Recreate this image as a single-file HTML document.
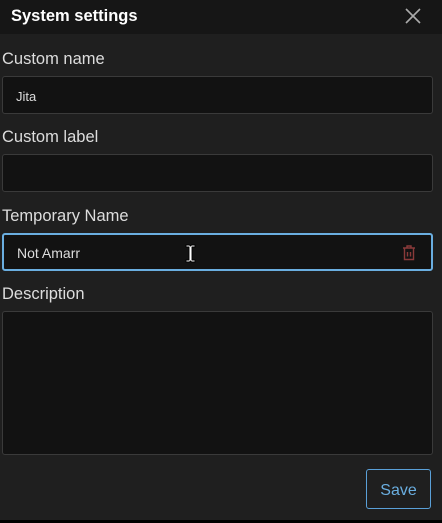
<!DOCTYPE html>
<html><head><style>
body{margin:0;width:442px;height:523px;background:#1f1f1f;font-family:"Liberation Sans",sans-serif;overflow:hidden;position:relative}
.hdr{position:absolute;left:0;top:0;width:442px;height:34px;background:#161616}
.ttl{position:absolute;left:11px;top:7px;color:#fff;font-weight:bold;font-size:16.5px}
.lbl{position:absolute;left:2px;color:#ddd;font-size:16.5px}
.inp{position:absolute;left:2px;width:431px;background:#121212;border:1px solid #3a3a3a;border-radius:3px;color:#ddd;font-size:13px;box-sizing:border-box}
.inp span{position:absolute;left:13px;top:12px}
.btn{position:absolute;left:366px;top:469px;width:65px;height:40px;box-sizing:border-box;border:1px solid #5aa0d8;border-radius:3px;color:#6aaee0;font-size:16px;text-align:center;line-height:42px}
</style></head><body>
<div class="hdr"><div class="ttl">System settings</div>
<svg style="position:absolute;left:405px;top:8px" width="16" height="16" viewBox="0 0 16 16"><path d="M1 1L15 15M15 1L1 15" stroke="#aaa" stroke-width="1.6"/></svg></div>
<div class="lbl" style="top:50px">Custom name</div>
<div class="inp" style="top:76px;height:38px"><span>Jita</span></div>
<div class="lbl" style="top:128px">Custom label</div>
<div class="inp" style="top:154px;height:38px"></div>
<div class="lbl" style="top:207px">Temporary Name</div>
<div class="inp" style="top:233px;height:38px;border:2px solid #6aaee0;font-size:14px"><span style="left:13px;top:10px">Not Amarr</span>
<svg style="position:absolute;left:398px;top:9px" width="14" height="17" viewBox="0 0 14 17"><path d="M1 4H13M5 4V2H9V4M2.5 4V15.5H11.5V4M5.5 8V12.5M8.5 8V12.5" stroke="#8a3a3a" stroke-width="1.4" fill="none"/></svg>
<svg style="position:absolute;left:181px;top:9px" width="11" height="20" viewBox="0 0 11 20"><path d="M1 1H4.5L5.5 2L6.5 1H10V3H7V16H10V18H6.5L5.5 17L4.5 18H1V16H4V3H1Z" fill="#fff" stroke="#000" stroke-width="0.9"/></svg>
</div>
<div class="lbl" style="top:285px">Description</div>
<div class="inp" style="top:311px;height:144px"></div>
<div class="btn">Save</div>
<div style="position:absolute;left:0;top:520px;width:442px;height:3px;background:#000"></div>
</body></html>
